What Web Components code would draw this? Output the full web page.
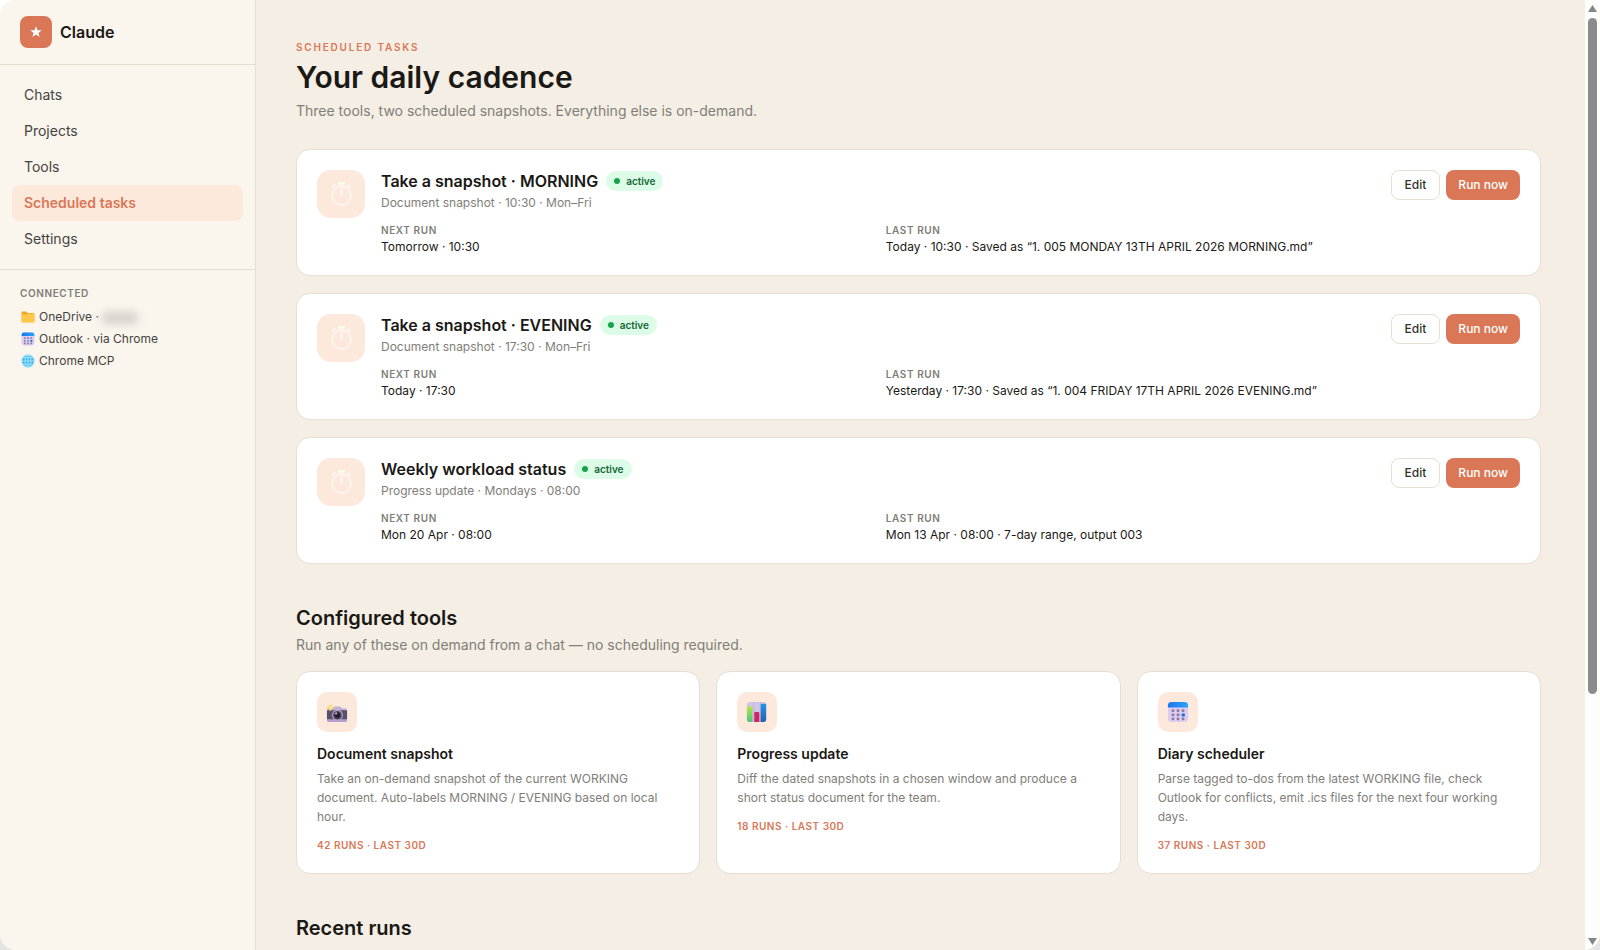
<!DOCTYPE html>
<html lang="en">
<head>
<meta charset="utf-8">
<meta name="viewport" content="width=device-width, initial-scale=1">
<title>Claude</title>
<style>
  :root {
    --accent: #d97757;
    --tint: #fde9dc;
    --line: #e5dfd3;
    --ink: #1a1915;
    --ink-soft: #45433e;
    --muted: #807e78;
  }
  html, body { height: 100%; }
  body {
    margin: 0;
    overflow: hidden;
    background: linear-gradient(#fff, #e4e4e4);
    color: var(--ink);
    font-family: Inter, "Liberation Sans", sans-serif;
    font-size: 13px;
  }
</style>
</head>
<body>
<app-window>
  <side-bar slot="side">
    <nav-item>Chats</nav-item>
    <nav-item>Projects</nav-item>
    <nav-item>Tools</nav-item>
    <nav-item active>Scheduled tasks</nav-item>
    <nav-item>Settings</nav-item>
    <connected-item slot="connected" icon="folder">OneDrive · <redacted-name></redacted-name></connected-item>
    <connected-item slot="connected" icon="calendar">Outlook · via Chrome</connected-item>
    <connected-item slot="connected" icon="globe">Chrome MCP</connected-item>
  </side-bar>

  <page-header kicker="Scheduled tasks" heading="Your daily cadence">Three tools, two scheduled snapshots. Everything else is on-demand.</page-header>

  <card-stack>
    <task-card heading="Take a snapshot · MORNING" next="Tomorrow · 10:30" last="Today · 10:30 · Saved as “1. 005 MONDAY 13TH APRIL 2026 MORNING.md”">Document snapshot · 10:30 · Mon–Fri</task-card>
    <task-card heading="Take a snapshot · EVENING" next="Today · 17:30" last="Yesterday · 17:30 · Saved as “1. 004 FRIDAY 17TH APRIL 2026 EVENING.md”">Document snapshot · 17:30 · Mon–Fri</task-card>
    <task-card heading="Weekly workload status" next="Mon 20 Apr · 08:00" last="Mon 13 Apr · 08:00 · 7-day range, output 003">Progress update · Mondays · 08:00</task-card>
  </card-stack>

  <page-section heading="Configured tools" sub="Run any of these on demand from a chat — no scheduling required.">
    <tool-card icon="camera" heading="Document snapshot" runs="42 runs · last 30d">Take an on-demand snapshot of the current WORKING document. Auto-labels MORNING / EVENING based on local hour.</tool-card>
    <tool-card icon="chart" heading="Progress update" runs="18 runs · last 30d">Diff the dated snapshots in a chosen window and produce a short status document for the team.</tool-card>
    <tool-card icon="calendar" heading="Diary scheduler" runs="37 runs · last 30d">Parse tagged to-dos from the latest WORKING file, check Outlook for conflicts, emit .ics files for the next four working days.</tool-card>
  </page-section>

  <page-section heading="Recent runs"></page-section>
</app-window>

<script>
const ICONS = {
  star: `<svg viewBox="0 0 24 24" fill="#fff"><path d="M12 2l2.6 7h7.4l-5.9 4.5 2.2 7.2L12 16.400l-6.300 4.300 2.200-7.200L2 9h7.400z"/></svg>`,

  timer: `<svg viewBox="0 0 24 24" fill="none" stroke="#fffcfa" stroke-linecap="round">
    <circle cx="12" cy="13" r="9"/>
    <path d="M12 7v6" stroke-width="1.500"/>
    <path d="M9.500 1.500h5M12 1.500v2.500" stroke-width="2"/>
    <path d="M3.500 5l2-2M20.500 5l-2-2" stroke-width="1.500"/>
  </svg>`,

  folder: `<svg viewBox="0 0 24 24">
    <path d="M1 4.500Q1 2.500 3 2.500h6l2.500 2.500H21q2 0 2 2V19q0 2-2 2H3q-2 0-2-2z" fill="#f5a623"/>
    <path d="M1 9q0-1.500 1.500-1.500h7L12 6h9q2 0 2 2v11q0 2.500-2 2.500H3q-2 0-2-2.500z" fill="#ffc84d"/>
  </svg>`,

  calendar: `<svg viewBox="0 0 24 24">
    <defs><linearGradient id="top" x2="1"><stop stop-color="#1d74ec"/><stop offset="1" stop-color="#2aa5fb"/></linearGradient></defs>
    <rect x="1" y="1" width="22" height="22" rx="4" fill="#dccdf0"/>
    <path d="M1 7V5q0-4 4-4h14q4 0 4 4v2z" fill="url(#top)"/>
    <g fill="#8b7b9f">
      <rect x="5" y="9" width="3" height="3" rx="1"/><rect x="10.500" y="9" width="3" height="3" rx="1"/><rect x="16" y="9" width="3" height="3" rx="1"/>
      <rect x="5" y="13.500" width="3" height="3" rx="1"/><rect x="10.500" y="13.500" width="3" height="3" rx="1"/>
      <rect x="5" y="18" width="3" height="3" rx="1"/><rect x="10.500" y="18" width="3" height="3" rx="1"/><rect x="16" y="18" width="3" height="3" rx="1"/>
    </g>
    <rect x="16" y="13.500" width="3.500" height="3.500" rx="1" fill="#1675dc"/>
  </svg>`,

  globe: `<svg viewBox="0 0 24 24">
    <circle cx="12" cy="12" r="11" fill="#36b3ea"/>
    <g fill="none" stroke="#b4e9ff" stroke-width="1.500">
      <circle cx="12" cy="12" r="10.500"/><ellipse cx="12" cy="12" rx="5" ry="10.500"/>
      <path d="M12 1v22M1 12h22M3 6.500h18M3 17.500h18"/>
    </g>
  </svg>`,

  camera: `<svg viewBox="0 0 24 24">
    <path d="M1 10q0-2 2-2h4.500l2-2h6l2 2H21q2 0 2 2v1H1z" fill="#c2b2d6"/>
    <rect x="1" y="10" width="22" height="11" rx="1" fill="#5b506a"/>
    <path d="M1 20h22v1q0 2-2 2H3q-2 0-2-2z" fill="#b3a0cf"/>
    <circle cx="12.500" cy="15.500" r="6" fill="#b5a9c6"/>
    <circle cx="12.500" cy="15.500" r="4.700" fill="#4b4059"/>
    <circle cx="12.500" cy="15.500" r="2.800" fill="#251d30"/>
    <circle cx="11" cy="13.700" r="1.100" fill="#d6cbe2"/>
    <path d="M5 3.500l1.300 2.200L9 7 6.500 8.500 5 11.500 3.500 8.500 1 7l2.500-1.300z" fill="#f8d44c"/>
    <circle cx="5" cy="7.300" r="1.300" fill="#fff6bf"/>
  </svg>`,

  chart: `<svg viewBox="0 0 24 24">
    <defs>
      <linearGradient id="g" y2="1" x2="0"><stop stop-color="#b5e34d"/><stop offset="1" stop-color="#4ac47d"/></linearGradient>
      <linearGradient id="b" y2="1" x2="0"><stop stop-color="#2196e8"/><stop offset="1" stop-color="#285cad"/></linearGradient>
    </defs>
    <rect x="1" y="1" width="21" height="22" rx="3" fill="#d3c5e4"/>
    <path d="M8.500 1v22M15.500 1v22" stroke="#b9acce" stroke-width=".7"/>
    <path d="M1 7q0-1 1-1h4q1 0 1 1v16H4q-3 0-3-3z" fill="url(#g)"/>
    <path d="M9 13q0-1 1-1h3.500q1 0 1 1v10H9z" fill="#d32465"/>
    <path d="M16 4q0-1 1-1H21q1 0 1 1v16q0 3-3 3h-3z" fill="url(#b)"/>
  </svg>`
};

class AppWindow extends HTMLElement {
  constructor() {
    super();
    this.attachShadow({ mode: "open" });
    this.shadowRoot.innerHTML = `
      <style>
        :host {
          display: grid;
          grid-template-columns: 256px 1fr 15px;
          height: 100vh;
          border-radius: 16px;
          overflow: hidden;
          background: #f5eee4;
        }
        main {
          min-width: 0;
          overflow: hidden;
          padding: 40px 44px 0 40px;
        }
      </style>
      <slot name="side"></slot>
      <main><slot></slot></main>
      <scroll-rail></scroll-rail>
    `;
  }
}

class ScrollRail extends HTMLElement {
  constructor() {
    super();
    this.attachShadow({ mode: "open" });
    this.shadowRoot.innerHTML = `
      <style>
        :host {
          display: flex;
          flex-direction: column;
          align-items: center;
          padding: 5px 0;
          background: #fdfdfb;
        }
        svg { width: 9px; height: 7px; fill: #858585; }
        .track { flex: 1; width: 9px; padding: 6px 0; }
        .thumb { height: 74%; border-radius: 5px; background: #8b8b8b; }
      </style>
      <svg viewBox="0 0 9 7"><path d="M4.500 0L9 7H0z"/></svg>
      <div class="track"><div class="thumb"></div></div>
      <svg viewBox="0 0 9 7"><path d="M4.500 7L9 0H0z"/></svg>
    `;
  }
}

class SideBar extends HTMLElement {
  constructor() {
    super();
    this.attachShadow({ mode: "open" });
    this.shadowRoot.innerHTML = `
      <style>
        :host {
          display: block;
          box-sizing: border-box;
          border-right: 1px solid var(--line);
          background: #faf5ed;
        }
        .brand {
          display: flex;
          align-items: center;
          gap: 8px;
          padding: 16px 20px;
          border-bottom: 1px solid var(--line);
          font-size: 16px;
          font-weight: 600;
        }
        .logo {
          display: grid;
          place-items: center;
          width: 32px;
          height: 32px;
          border-radius: 8px;
          background: var(--accent);
        }
        .logo svg { width: 14px; height: 14px; }
        nav {
          padding: 12px;
          border-bottom: 1px solid var(--line);
        }
        section { padding: 16px 20px; }
        h2 {
          margin: 0 0 6px;
          color: var(--muted);
          font-size: 10px;
          line-height: 14px;
          font-weight: 600;
          letter-spacing: 0.06em;
          text-transform: uppercase;
        }
      </style>
      <div class="brand"><span class="logo">${ICONS.star}</span><span>Claude</span></div>
      <nav><slot></slot></nav>
      <section>
        <h2>Connected</h2>
        <slot name="connected"></slot>
      </section>
    `;
  }
}

class NavItem extends HTMLElement {
  constructor() {
    super();
    this.attachShadow({ mode: "open" });
    this.shadowRoot.innerHTML = `
      <style>
        :host { display: block; }
        a {
          display: block;
          padding: 8px 12px;
          border-radius: 8px;
          color: var(--ink-soft);
          font-size: 14px;
          line-height: 20px;
          text-decoration: none;
        }
        :host([active]) a {
          background: var(--tint);
          color: var(--accent);
          font-weight: 600;
        }
      </style>
      <a href="#"><slot></slot></a>
    `;
  }
}

class ConnectedItem extends HTMLElement {
  constructor() {
    super();
    this.attachShadow({ mode: "open" });
    this.shadowRoot.innerHTML = `
      <style>
        :host {
          display: flex;
          align-items: center;
          gap: 4px;
          padding-left: 1px;
          color: var(--ink-soft);
          font-size: 12px;
          line-height: 22px;
        }
        svg { width: 14px; height: 14px; }
      </style>
      ${ICONS[this.getAttribute("icon")]}
      <span><slot></slot></span>
    `;
  }
}

class RedactedName extends HTMLElement {
  constructor() {
    super();
    this.attachShadow({ mode: "open" });
    this.shadowRoot.innerHTML = `
      <style>
        :host {
          display: inline-block;
          width: 36px;
          height: 12px;
          border-radius: 4px;
          background: #d6d2cb;
          filter: blur(4px);
          vertical-align: middle;
        }
      </style>
    `;
  }
}

class PageHeader extends HTMLElement {
  constructor() {
    super();
    this.attachShadow({ mode: "open" });
    this.shadowRoot.innerHTML = `
      <style>
        :host { display: block; margin-bottom: 28px; }
        .kicker {
          margin: 0 0 4px;
          color: var(--accent);
          font-size: 10px;
          line-height: 14px;
          font-weight: 600;
          letter-spacing: 0.18em;
          text-transform: uppercase;
        }
        h1 {
          margin: 0 0 4px;
          font-size: 30px;
          line-height: 38px;
          font-weight: 600;
        }
        .sub {
          margin: 0;
          color: var(--muted);
          font-size: 14px;
          line-height: 21px;
        }
      </style>
      <p class="kicker">${this.getAttribute("kicker")}</p>
      <h1>${this.getAttribute("heading")}</h1>
      <p class="sub"><slot></slot></p>
    `;
  }
}

class CardStack extends HTMLElement {
  constructor() {
    super();
    this.attachShadow({ mode: "open" });
    this.shadowRoot.innerHTML = `
      <style>
        :host { display: grid; gap: 17px; }
      </style>
      <slot></slot>
    `;
  }
}

class TaskCard extends HTMLElement {
  constructor() {
    super();
    this.attachShadow({ mode: "open" });
    this.shadowRoot.innerHTML = `
      <style>
        :host {
          display: flex;
          align-items: flex-start;
          gap: 16px;
          padding: 20px;
          border: 1px solid var(--line);
          border-radius: 14px;
          background: #fff;
        }
        .icon {
          display: grid;
          place-items: center;
          width: 48px;
          height: 48px;
          border-radius: 14px;
          background: var(--tint);
        }
        .icon svg { width: 25px; height: 25px; }
        .body { flex: 1; min-width: 0; }
        .title { display: flex; align-items: center; gap: 8px; }
        h3 {
          margin: 0;
          font-size: 16px;
          line-height: 22px;
          font-weight: 600;
        }
        .desc {
          margin: 2px 0 11px;
          color: var(--muted);
          font-size: 12px;
          line-height: 18px;
        }
        dl {
          display: grid;
          grid-template-columns: 1fr 1fr;
          gap: 16px;
          margin: 0;
        }
        dt {
          color: var(--muted);
          font-size: 10px;
          line-height: 14px;
          font-weight: 600;
          letter-spacing: 0.06em;
          text-transform: uppercase;
        }
        dd {
          margin: 2px 0 0;
          font-size: 12px;
          line-height: 16px;
        }
        .actions { display: flex; gap: 6px; }
        button {
          height: 30px;
          padding: 0 13px 1px;
          border: 1px solid var(--line);
          border-radius: 8px;
          background: #fff;
          color: #33312d;
          font: 500 12px Inter, "Liberation Sans", sans-serif;
          cursor: pointer;
        }
        .run {
          padding: 0 12px 1px;
          border: 0;
          background: var(--accent);
          color: #fff;
        }
      </style>
      <div class="icon">${ICONS.timer}</div>
      <div class="body">
        <div class="title">
          <h3>${this.getAttribute("heading")}</h3>
          <status-badge>active</status-badge>
        </div>
        <p class="desc"><slot></slot></p>
        <dl>
          <div><dt>Next run</dt><dd>${this.getAttribute("next")}</dd></div>
          <div><dt>Last run</dt><dd>${this.getAttribute("last")}</dd></div>
        </dl>
      </div>
      <div class="actions">
        <button type="button">Edit</button>
        <button type="button" class="run">Run now</button>
      </div>
    `;
  }
}

class StatusBadge extends HTMLElement {
  constructor() {
    super();
    this.attachShadow({ mode: "open" });
    this.shadowRoot.innerHTML = `
      <style>
        :host {
          display: inline-flex;
          align-items: center;
          gap: 6px;
          padding: 0 8px;
          border-radius: 10px;
          background: #dcfce7;
          color: #166534;
          font-size: 10px;
          line-height: 20px;
          font-weight: 600;
        }
        .dot {
          width: 6px;
          height: 6px;
          border-radius: 50%;
          background: #16a34a;
        }
      </style>
      <span class="dot"></span><span><slot></slot></span>
    `;
  }
}

class PageSection extends HTMLElement {
  constructor() {
    super();
    this.attachShadow({ mode: "open" });
    const sub = this.getAttribute("sub");
    this.shadowRoot.innerHTML = `
      <style>
        :host { display: block; margin-top: 42px; }
        h2 {
          margin: 0 0 4px;
          font-size: 20px;
          line-height: 24px;
          font-weight: 600;
        }
        p {
          margin: 0 0 16px;
          color: var(--muted);
          font-size: 14px;
          line-height: 21px;
        }
        .grid {
          display: grid;
          grid-template-columns: repeat(3, 1fr);
          gap: 16px;
        }
      </style>
      <h2>${this.getAttribute("heading")}</h2>
      ${sub ? `<p>${sub}</p>` : ""}
      <div class="grid"><slot></slot></div>
    `;
  }
}

class ToolCard extends HTMLElement {
  constructor() {
    super();
    this.attachShadow({ mode: "open" });
    this.shadowRoot.innerHTML = `
      <style>
        :host {
          display: block;
          padding: 20px;
          border: 1px solid var(--line);
          border-radius: 14px;
          background: #fff;
        }
        .icon {
          display: grid;
          place-items: center;
          width: 40px;
          height: 40px;
          border-radius: 10px;
          background: var(--tint);
        }
        .icon svg { width: 22px; height: 22px; }
        h3 {
          margin: 12px 0 5px;
          font-size: 14px;
          line-height: 20px;
          font-weight: 600;
        }
        .desc {
          margin: 0 0 12px;
          color: var(--muted);
          font-size: 12px;
          line-height: 19px;
        }
        .runs {
          margin: 0;
          color: var(--accent);
          font-size: 10px;
          line-height: 15px;
          font-weight: 600;
          letter-spacing: 0.05em;
          text-transform: uppercase;
        }
      </style>
      <div class="icon">${ICONS[this.getAttribute("icon")]}</div>
      <h3>${this.getAttribute("heading")}</h3>
      <p class="desc"><slot></slot></p>
      <p class="runs">${this.getAttribute("runs")}</p>
    `;
  }
}

customElements.define("app-window", AppWindow);
customElements.define("scroll-rail", ScrollRail);
customElements.define("side-bar", SideBar);
customElements.define("nav-item", NavItem);
customElements.define("connected-item", ConnectedItem);
customElements.define("redacted-name", RedactedName);
customElements.define("page-header", PageHeader);
customElements.define("card-stack", CardStack);
customElements.define("task-card", TaskCard);
customElements.define("status-badge", StatusBadge);
customElements.define("page-section", PageSection);
customElements.define("tool-card", ToolCard);
</script>
</body>
</html>
